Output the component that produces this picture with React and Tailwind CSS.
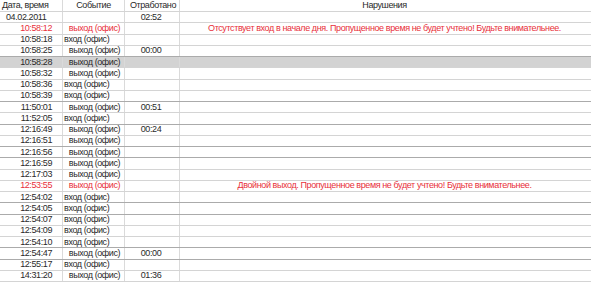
import React from 'react'

// Журнал проходов за день — таблица в стиле отчёта

const rows = [
  { time: '04.02.2011', date: true, worked: '02:52' },
  { time: '10:58:12', ev: 'out', red: true, note: 'Отсутствует вход в начале дня. Пропущенное время не будет учтено! Будьте внимательнее.' },
  { time: '10:58:18', ev: 'in' },
  { time: '10:58:25', ev: 'out', worked: '00:00', dark: true },
  { time: '10:58:28', ev: 'out', grey: true },
  { time: '10:58:32', ev: 'out' },
  { time: '10:58:36', ev: 'in' },
  { time: '10:58:39', ev: 'in', dark: true },
  { time: '11:50:01', ev: 'out', worked: '00:51' },
  { time: '11:52:05', ev: 'in', dark: true },
  { time: '12:16:49', ev: 'out', worked: '00:24' },
  { time: '12:16:51', ev: 'out', dark: true },
  { time: '12:16:56', ev: 'out', dark: true },
  { time: '12:16:59', ev: 'out' },
  { time: '12:17:03', ev: 'out' },
  { time: '12:53:55', ev: 'out', red: true, note: 'Двойной выход. Пропущенное время не будет учтено! Будьте внимательнее.' },
  { time: '12:54:02', ev: 'in', dark: true },
  { time: '12:54:05', ev: 'in', dark: true },
  { time: '12:54:07', ev: 'in' },
  { time: '12:54:09', ev: 'in' },
  { time: '12:54:10', ev: 'in', dark: true },
  { time: '12:54:47', ev: 'out', worked: '00:00', dark: true },
  { time: '12:55:17', ev: 'in' },
  { time: '14:31:20', ev: 'out', worked: '01:36' },
]

function Row({ r }) {
  const line = r.dark ? 'border-[#ababab]' : 'border-[#d4d4d4]'
  const color = r.red ? 'text-[#e8303a]' : 'text-[#2a2a2a]'
  return (
    <div className={`flex h-[11.25px] items-center border-b ${line} ${r.grey ? 'bg-[#d3d3d3]' : ''} ${color}`}>
      {r.date ? (
        <div className="w-[63px] h-full flex items-center pl-[6px] border-r border-[#dadada]">{r.time}</div>
      ) : (
        <div className="w-[63px] h-full flex items-center justify-end pr-[10px] border-r border-[#dadada]">{r.time}</div>
      )}
      <div className={`w-[62px] h-full flex items-center border-r border-[#dadada] ${r.ev === 'out' ? 'justify-center pl-[2px]' : 'pl-[1px]'}`}>
        {r.ev === 'out' ? 'выход (офис)' : r.ev === 'in' ? 'вход (офис)' : ''}
      </div>
      <div className="w-[55px] h-full flex items-center justify-center pr-[2px] border-r border-[#dadada] text-[#2a2a2a]">
        {r.worked}
      </div>
      <div className="w-[409px] h-full flex items-center justify-center">{r.note}</div>
    </div>
  )
}

export default function App() {
  return (
    <div className="w-[591px] h-[284px] overflow-hidden bg-white font-['Liberation_Sans',Arial,sans-serif] text-[9px] tracking-[-0.4px] leading-none">
      <div className="flex h-[12px] items-center border-b border-[#d4d4d4] text-[#2a2a2a]">
        <div className="w-[63px] h-full flex items-center pl-[2px] border-r border-[#dadada]">Дата, время</div>
        <div className="w-[62px] h-full flex items-center justify-center border-r border-[#dadada]">Событие</div>
        <div className="w-[55px] h-full flex items-center justify-center pl-[2px] border-r border-[#dadada]">Отработано</div>
        <div className="w-[409px] h-full flex items-center justify-center">Нарушения</div>
      </div>
      {rows.map((r, i) => (
        <Row key={i} r={r} />
      ))}
    </div>
  )
}
